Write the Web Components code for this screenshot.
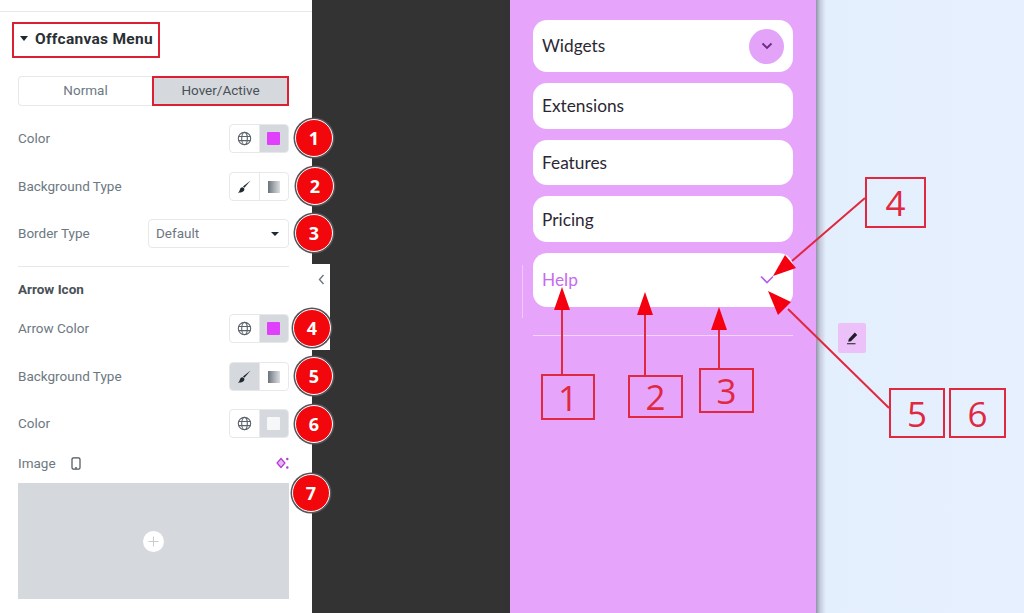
<!DOCTYPE html>
<html>
<head>
<meta charset="utf-8">
<style>
  html, body { margin: 0; padding: 0; }
  body { width: 1024px; height: 613px; overflow: hidden; font-family: Roboto, "Liberation Sans", sans-serif; }
</style>
</head>
<body>
<editor-shot></editor-shot>

<template id="icons">
  <svg data-name="globe" viewBox="0 0 16 16" width="15" height="15" fill="none" stroke="#5b636b" stroke-width="1.2"><circle cx="8" cy="8" r="6.6"/><ellipse cx="8" cy="8" rx="3" ry="6.6"/><path d="M1.6 5.8h12.8M1.6 10.2h12.8"/></svg>
  <svg data-name="brush" viewBox="0 0 16 16" width="16" height="16"><path d="M14.6 1.6 8.4 8.8 7 7.600z" fill="#1f2933"/><path d="M6.400 8.200c1.100.1 2 1 2 2.100 0 2.200-2.700 3.500-6.600 3.400 1.600-.9 1.700-2 2.200-3.400.4-1.300 1.200-2.100 2.400-2.100z" fill="#1f2933"/></svg>
  <svg data-name="gradient" viewBox="0 0 12 12" width="12" height="12"><defs><linearGradient id="g"><stop offset="0" stop-color="#6a727a"/><stop offset=".5" stop-color="#a5abb1"/><stop offset="1" stop-color="#dcdfe2"/></linearGradient></defs><rect width="12" height="12" fill="url(#g)"/></svg>
</template>

<script>
  function icon(name) {
    return document.getElementById("icons").content.querySelector(`[data-name="${name}"]`).outerHTML;
  }

  // two-part switch used by the colour and background rows
  class ToggleGroup extends HTMLElement {
    constructor() {
      super();
      const shadowRoot = this.attachShadow({ mode: "open" });
      shadowRoot.innerHTML = `<style>
  :host { display: flex; width: 60px; height: 29px; box-sizing: border-box; border: 1px solid #e6e8ea; border-radius: 4px; overflow: hidden; background: #fff; }
  .cell { flex: 1; display: flex; align-items: center; justify-content: center; }
  .cell + .cell { border-left: 1px solid #e6e8ea; }
  .on { background: #d5d8dc; }
  .swatch { width: 13px; height: 13px; border-radius: 1px; }
</style><div class="cell" id="a"></div><div class="cell" id="b"></div>`;
    }
    connectedCallback() {
      const a = this.shadowRoot.getElementById("a");
      const b = this.shadowRoot.getElementById("b");
      if (this.getAttribute("kind") === "color") {
        a.innerHTML = icon("globe");
        b.innerHTML = `<div class="swatch" style="background:${this.getAttribute("swatch")}"></div>`;
        b.classList.add("on");
      } else {
        a.innerHTML = icon("brush");
        b.innerHTML = icon("gradient");
        if (this.hasAttribute("active")) a.classList.add("on");
      }
    }
  }
  customElements.define("toggle-group", ToggleGroup);

  class ControlRow extends HTMLElement {
    constructor() {
      super();
      const shadowRoot = this.attachShadow({ mode: "open" });
      shadowRoot.innerHTML = `<style>
  :host { display: flex; align-items: center; justify-content: space-between; height: 29px; color: #6d7882; font-size: 13.500px; }
  ::slotted([slot="label"]) { margin-bottom: 2px; }
</style><slot name="label"></slot><slot></slot>`;
    }
  }
  customElements.define("control-row", ControlRow);

  class SectionHeader extends HTMLElement {
    constructor() {
      super();
      const shadowRoot = this.attachShadow({ mode: "open" });
      shadowRoot.innerHTML = `<style>
  :host { display: flex; align-items: center; gap: 7px; width: 148px; height: 36px; box-sizing: border-box; margin-left: -6px; padding: 0 0 3px 6px; border: 2px solid #dd1f34; color: #2a2f35; font-size: 15.500px; font-weight: 700; letter-spacing: .3px; white-space: nowrap; }
  .caret { width: 0; height: 0; border: 4px solid transparent; border-top: 5px solid #1f2933; border-bottom: 0; }
</style><div class="caret"></div><slot></slot>`;
    }
  }
  customElements.define("section-header", SectionHeader);

  class TabSwitch extends HTMLElement {
    constructor() {
      super();
      const shadowRoot = this.attachShadow({ mode: "open" });
      shadowRoot.innerHTML = `<style>
  :host { display: flex; height: 30px; font-size: 13.500px; color: #6d7882; }
  div { flex: 1; display: flex; align-items: center; justify-content: center; box-sizing: border-box; padding-bottom: 2px; }
  .normal { border: 1px solid #e6e8ea; border-right: 0; border-radius: 4px 0 0 4px; }
  .active { background: #d5d8dc; color: #495157; border: 2px solid #dd1f34; }
</style><div class="normal">Normal</div><div class="active">Hover/Active</div>`;
    }
  }
  customElements.define("tab-switch", TabSwitch);

  class SelectBox extends HTMLElement {
    constructor() {
      super();
      const shadowRoot = this.attachShadow({ mode: "open" });
      shadowRoot.innerHTML = `<style>
  :host { display: flex; align-items: center; justify-content: space-between; width: 141px; height: 29px; box-sizing: border-box; padding: 0 5px 2px 7px; border: 1px solid #e6e8ea; border-radius: 4px; color: #6d7882; font-size: 13.500px; }
  .caret { width: 0; height: 0; margin: 2px 4px 0 0; border: 4px solid transparent; border-top: 4px solid #1f2933; border-bottom: 0; }
</style><slot></slot><div class="caret"></div>`;
    }
  }
  customElements.define("select-box", SelectBox);

  class ImagePicker extends HTMLElement {
    constructor() {
      super();
      const shadowRoot = this.attachShadow({ mode: "open" });
      shadowRoot.innerHTML = `<style>
  :host { display: flex; align-items: center; justify-content: center; height: 116px; background: #d5d8dc; }
</style><svg width="21" height="21" viewBox="0 0 21 21"><circle cx="10.500" cy="10.500" r="10.500" fill="#fff"/><path d="M10.500 5.500v10M5.500 10.500h10" stroke="#c9cdd2" stroke-width="1"/></svg>`;
    }
  }
  customElements.define("image-picker", ImagePicker);

  class SidePanel extends HTMLElement {
    constructor() {
      super();
      const shadowRoot = this.attachShadow({ mode: "open" });
      shadowRoot.innerHTML = `<style>
  :host { display: block; position: relative; box-sizing: border-box; width: 312px; height: 613px; padding: 0 23px 0 18px; background: #fff; }
  .topline { height: 11px; margin: 0 -23px 10px -18px; border-bottom: 1px solid #e6e8ea; }
  tab-switch { margin-top: 18px; }
  .first { margin-top: 18px; }
  control-row { margin-bottom: 19px; }
  .tight { margin-bottom: 18px; }
  hr { border: 0; border-top: 1px solid #e6e8ea; margin: -1px 0 0; }
  h4 { margin: 14px 0 0; height: 17px; line-height: 17px; font-size: 13.500px; font-weight: 700; color: #495157; }
  .arrow-first { margin-top: 16px; }
  .image-row { display: flex; align-items: center; justify-content: space-between; height: 16px; margin: -2px 0 12px; color: #6d7882; font-size: 13.500px; }
  .image-left { display: flex; align-items: center; gap: 15px; }
  /* collapse handle sticking out of the panel */
  .handle { position: absolute; left: 312px; top: 264px; width: 18px; height: 86px; background: #fff; display: flex; align-items: center; justify-content: center; padding-bottom: 55px; box-sizing: border-box; }
</style>
<div class="topline"></div>
<section-header>Offcanvas Menu</section-header>
<tab-switch></tab-switch>
<control-row class="first"><span slot="label">Color</span><toggle-group kind="color" swatch="#e040fb"></toggle-group></control-row>
<control-row class="tight"><span slot="label">Background Type</span><toggle-group kind="bg"></toggle-group></control-row>
<control-row><span slot="label">Border Type</span><select-box>Default</select-box></control-row>
<hr>
<h4>Arrow Icon</h4>
<control-row class="arrow-first"><span slot="label">Arrow Color</span><toggle-group kind="color" swatch="#e040fb"></toggle-group></control-row>
<control-row class="tight"><span slot="label">Background Type</span><toggle-group kind="bg" active></toggle-group></control-row>
<control-row><span slot="label">Color</span><toggle-group kind="color" swatch="#f6f7f8"></toggle-group></control-row>
<div class="image-row">
  <div class="image-left">Image
    <svg width="10" height="13" viewBox="0 0 10 13" fill="none" stroke="#495157" stroke-width="1.200"><rect x="1" y=".8" width="8" height="11.400" rx="1.500"/><path d="M4 10.800h2"/></svg>
  </div>
  <svg width="14" height="14" viewBox="0 0 14 14"><path d="M6 2.500 10 7 6 11.500 2 7z" fill="#eab4f7" stroke="#b13ccf" stroke-width="1.200"/><circle cx="12.300" cy="3" r="1.200" fill="#b13ccf"/><circle cx="12.300" cy="11.500" r="1.200" fill="#b13ccf"/></svg>
</div>
<image-picker></image-picker>
<div class="handle"><svg width="7" height="11" viewBox="0 0 7 11" fill="none" stroke="#6d7882" stroke-width="1.400"><path d="M5.500 1 1.500 5.500 5.500 10"/></svg></div>`;
    }
  }
  customElements.define("side-panel", SidePanel);

  class MenuItem extends HTMLElement {
    constructor() {
      super();
      const shadowRoot = this.attachShadow({ mode: "open" });
      shadowRoot.innerHTML = `<style>
  :host { display: flex; align-items: center; justify-content: space-between; box-sizing: border-box; height: 45.700px; padding: 0 9px; background: #fff; border-radius: 14px; color: #2c2733; font-family: Lato, "Open Sans", sans-serif; font-size: 17.300px; }
  :host([tall]) { height: 52px; padding-bottom: 2px; }
  :host([help]) { height: 54px; color: #c66bee; padding-bottom: 2px; }
  .knob { width: 35px; height: 35px; border-radius: 50%; background: #e3a3f8; margin-bottom: -2px; display: flex; align-items: center; justify-content: center; }
  .bare { width: 35px; height: 35px; display: flex; align-items: center; justify-content: center; }
</style><slot></slot><div id="icon"></div>`;
    }
    connectedCallback() {
      const holder = this.shadowRoot.getElementById("icon");
      if (this.hasAttribute("tall")) {
        holder.className = "knob";
        holder.innerHTML = `<svg width="12" height="8" viewBox="0 0 12 8" fill="none" stroke="#6a2a80" stroke-width="1.800"><path d="M1.500 1.500 6 6 10.500 1.500"/></svg>`;
      } else if (this.hasAttribute("help")) {
        holder.className = "bare";
        holder.innerHTML = `<svg width="14" height="9" viewBox="0 0 14 9" fill="none" stroke="#b45ee6" stroke-width="1.600"><path d="M1 1.500 7 7.500 13 1.500"/></svg>`;
      }
    }
  }
  customElements.define("menu-item", MenuItem);

  class OffcanvasPanel extends HTMLElement {
    constructor() {
      super();
      const shadowRoot = this.attachShadow({ mode: "open" });
      shadowRoot.innerHTML = `<style>
  :host { display: flex; flex-direction: column; position: relative; box-sizing: border-box; width: 306px; height: 613px; padding: 20px 23px 0; background: #e6a4fb; }
  menu-item { margin-bottom: 11px; }
  .rule { height: 1px; margin-top: 17px; background: #f2d3fc; }
  .grip { position: absolute; left: 12px; top: 265px; width: 1px; height: 53px; background: #eccafa; }
</style>
<menu-item tall>Widgets</menu-item>
<menu-item>Extensions</menu-item>
<menu-item>Features</menu-item>
<menu-item>Pricing</menu-item>
<menu-item help>Help</menu-item>
<div class="rule"></div>
<div class="grip"></div>`;
    }
  }
  customElements.define("offcanvas-panel", OffcanvasPanel);

  class PreviewPane extends HTMLElement {
    constructor() {
      super();
      const shadowRoot = this.attachShadow({ mode: "open" });
      shadowRoot.innerHTML = `<style>
  :host { display: block; position: relative; flex: 1; height: 613px; background: linear-gradient(90deg, #8f94a8 0, #c4cbdc 4px, #e4effd 10px, #e6f0fe 100%); }
  .edit { position: absolute; left: 22px; top: 323px; width: 28px; height: 30px; border-radius: 2px; background: #ecc1f9; display: flex; align-items: center; justify-content: center; }
</style><div class="edit"><svg width="14" height="14" viewBox="0 0 14 14"><path d="M9.800 1.600 12.200 4 6 10.200 3.200 10.800 3.800 8zM2 12.300h8.500v1H2z" fill="#1c1c24"/></svg></div>`;
    }
  }
  customElements.define("preview-pane", PreviewPane);

  // red numbered dot laid over the screenshot
  class NumBadge extends HTMLElement {
    constructor() {
      super();
      const shadowRoot = this.attachShadow({ mode: "open" });
      shadowRoot.innerHTML = `<style>
  :host { position: absolute; width: 38px; height: 38px; margin: -19px 0 0 -19px; box-sizing: border-box; border-radius: 50%; background: #f2070d; border: 1.500px solid #fff; box-shadow: 0 0 0 1.500px #55555a; display: flex; align-items: center; justify-content: center; color: #fff; font-family: "Open Sans", sans-serif; font-weight: 700; font-size: 18px; }
</style><slot></slot>`;
    }
    connectedCallback() {
      this.style.left = this.getAttribute("x") + "px";
      this.style.top = this.getAttribute("y") + "px";
    }
  }
  customElements.define("num-badge", NumBadge);

  // outlined red number box of the annotation
  class CalloutBox extends HTMLElement {
    constructor() {
      super();
      const shadowRoot = this.attachShadow({ mode: "open" });
      shadowRoot.innerHTML = `<style>
  :host { position: absolute; box-sizing: border-box; border: 2px solid #e0283f; display: flex; align-items: center; justify-content: center; color: #e0283f; font-family: "Open Sans", sans-serif; font-size: 35px; line-height: 1; }
</style><slot></slot>`;
    }
    connectedCallback() {
      const [x, y, w, h] = this.getAttribute("box").split(",");
      Object.assign(this.style, { left: x + "px", top: y + "px", width: w + "px", height: h + "px" });
    }
  }
  customElements.define("callout-box", CalloutBox);

  class AnnotationLayer extends HTMLElement {
    constructor() {
      super();
      const shadowRoot = this.attachShadow({ mode: "open" });
      shadowRoot.innerHTML = `<style>
  :host { position: absolute; inset: 0; display: block; pointer-events: none; }
  svg { position: absolute; left: 0; top: 0; }
</style>
<svg width="1024" height="613" fill="none" stroke="#e0283f" stroke-width="2">
  <path d="M562 374V308M645 375V314M719 368V328M865 198 792 261M889 408 788 309"/>
  <g fill="#f40010" stroke="none">
    <path d="M562 287 570 310H554z"/>
    <path d="M645 292 653 315H637z"/>
    <path d="M719 307 727 330H711z"/>
    <path d="M773 276 785 255 796 268z"/>
    <path d="M768 291 791 302 778 315z"/>
  </g>
</svg>
<num-badge x="314" y="138">1</num-badge>
<num-badge x="315" y="186">2</num-badge>
<num-badge x="314" y="233">3</num-badge>
<num-badge x="312" y="328">4</num-badge>
<num-badge x="314" y="376">5</num-badge>
<num-badge x="314" y="424">6</num-badge>
<num-badge x="311" y="493">7</num-badge>
<callout-box box="541,374,54,46">1</callout-box>
<callout-box box="628,375,55,43">2</callout-box>
<callout-box box="699,368,55,45">3</callout-box>
<callout-box box="865,177,61,51">4</callout-box>
<callout-box box="889,388,56,50">5</callout-box>
<callout-box box="949,388,57,50">6</callout-box>`;
    }
  }
  customElements.define("annotation-layer", AnnotationLayer);

  class EditorShot extends HTMLElement {
    constructor() {
      super();
      const shadowRoot = this.attachShadow({ mode: "open" });
      shadowRoot.innerHTML = `<style>
  :host { display: flex; position: relative; width: 1024px; height: 613px; overflow: hidden; }
  .dark { width: 198px; background: #333333; }
</style>
<side-panel></side-panel>
<div class="dark"></div>
<offcanvas-panel></offcanvas-panel>
<preview-pane></preview-pane>
<annotation-layer></annotation-layer>`;
    }
  }
  customElements.define("editor-shot", EditorShot);
</script>
</body>
</html>
